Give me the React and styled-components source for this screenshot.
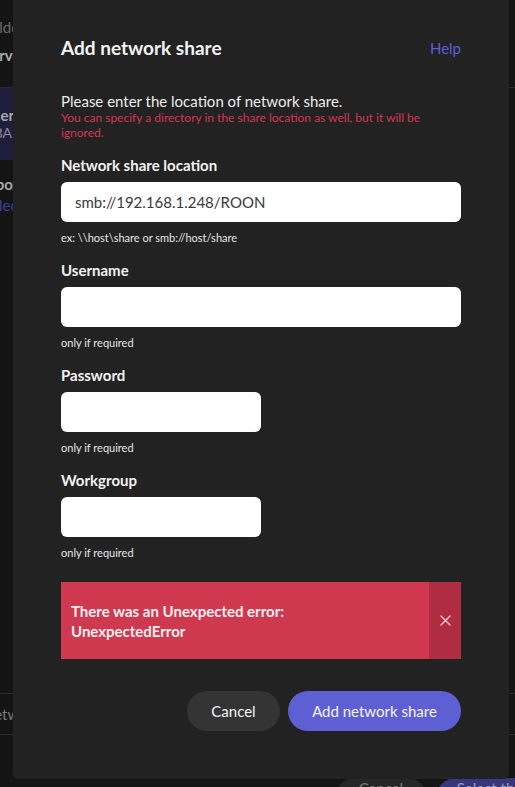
import React from "react";
import styled, { createGlobalStyle } from "styled-components";

const Global = createGlobalStyle`
  html, body {
    margin: 0;
    padding: 0;
    background: #141414;
    height: 787px;
    overflow: hidden;
  }
  body {
    font-family: Lato, "Open Sans", sans-serif;
    -webkit-font-smoothing: antialiased;
  }
  * { box-sizing: border-box; }
`;

/* ---------- background (dimmed dialog underneath) ---------- */
const Back = styled.div`
  display: flex;
  flex-direction: column;
  margin-left: -17px;
  width: 560px;
  height: 840px;
  font-family: Lato, sans-serif;
`;

const BackRow = styled.div`
  display: flex;
  flex-direction: column;
  justify-content: center;
  flex: none;
  height: ${(p) => p.$h}px;
  width: ${(p) => (p.$active ? "420px" : "auto")};
  background: ${(p) => (p.$active ? "#1e1e3c" : "transparent")};
  border-top: ${(p) => (p.$line ? "1px solid #2a2a2a" : "none")};
  border-bottom: ${(p) => (p.$lineBottom ? "1px solid #2a2a2a" : "none")};
`;

const BackText = styled.span`
  font-size: ${(p) => p.$size || 15}px;
  font-weight: ${(p) => (p.$bold ? 700 : 400)};
  color: ${(p) => p.$color || "#6a6a6a"};
  line-height: 18px;
  white-space: nowrap;
`;

const BackSpacer = styled.div`
  flex: 1;
`;

const BackFooter = styled.div`
  display: flex;
  justify-content: flex-end;
  gap: 9px;
  height: 62px;
  flex: none;
`;

const BackButton = styled.div`
  height: 40px;
  width: ${(p) => p.$w}px;
  border-radius: 20px 20px 0 0;
  background: ${(p) => (p.$primary ? "#36367a" : "#262626")};
  color: ${(p) => (p.$primary ? "#9a9ac4" : "#7a7a7a")};
  font-size: 15px;
  line-height: 18px;
  display: flex;
  justify-content: center;
  padding-top: 1px;
`;

/* ---------- modal ---------- */
const Overlay = styled.div`
  position: fixed;
  inset: 0;
  display: flex;
  align-items: flex-start;
  padding-left: 13px;
`;

const Modal = styled.div`
  width: 496px;
  margin-top: -8px;
  background: #222222;
  border-radius: 5px;
  padding: 45px 48px 48px;
  display: flex;
  flex-direction: column;
`;

const Header = styled.div`
  display: flex;
  justify-content: space-between;
  align-items: center;
  height: 22px;
`;

const Title = styled.h2`
  margin: 0;
  font-size: 19px;
  line-height: 22px;
  font-weight: 700;
  color: #f4f4f4;
`;

const HelpLink = styled.a`
  font-size: 15px;
  color: #5b5ed6;
  text-decoration: none;
  cursor: pointer;
`;

const Intro = styled.p`
  margin: 33px 0 0;
  font-size: 15px;
  line-height: 18px;
  color: #ececec;
`;

const Warning = styled.p`
  margin: 0;
  font-size: 12px;
  line-height: 15px;
  color: #d5364f;
`;

const Field = styled.div`
  display: flex;
  flex-direction: column;
  align-items: flex-start;
  margin-top: 16px;
`;

const Label = styled.label`
  font-size: 15px;
  line-height: 18px;
  font-weight: 700;
  color: #f2f2f2;
  margin-bottom: 8px;
`;

const Input = styled.input`
  width: ${(p) => (p.$short ? "200px" : "100%")};
  height: 40px;
  border: none;
  outline: none;
  border-radius: 6px;
  background: #ffffff;
  padding: 0 14px;
  font-family: Lato, sans-serif;
  font-size: 15px;
  color: #3a3a3a;
`;

const Hint = styled.span`
  margin-top: 9px;
  font-size: 11px;
  line-height: 14px;
  color: #e6e6e6;
`;

const ErrorBox = styled.div`
  margin-top: 22px;
  display: flex;
  background: #cf394f;
  min-height: 77px;
`;

const ErrorText = styled.div`
  flex: 1;
  padding: 19px 10px 18px;
  font-size: 15px;
  line-height: 20px;
  font-weight: 700;
  color: #fbeef0;
`;

const ErrorClose = styled.button`
  width: 32px;
  border: none;
  padding: 0;
  background: #b02d41;
  display: flex;
  align-items: center;
  justify-content: center;
  cursor: pointer;
`;

const Actions = styled.div`
  margin-top: 32px;
  display: flex;
  justify-content: flex-end;
  gap: 8px;
`;

const Button = styled.button`
  height: 40px;
  border: none;
  border-radius: 20px;
  padding: 0 24px;
  min-width: ${(p) => (p.$primary ? 173 : 93)}px;
  background: ${(p) => (p.$primary ? "#5e5fd2" : "#343434")};
  color: #f4f4f4;
  font-family: Lato, sans-serif;
  font-size: 15px;
  cursor: pointer;
`;

const CloseIcon = () => (
  <svg width="11" height="11" viewBox="0 0 11 11" fill="none">
    <path d="M1 1 L10 10 M10 1 L1 10" stroke="#f6d3d8" strokeWidth="1.3" strokeLinecap="round" />
  </svg>
);

export default function App() {
  return (
    <>
      <Global />
      <Back>
        <BackRow $h={17} />
        <BackRow $h={20}>
          <BackText>Folder</BackText>
        </BackRow>
        <BackRow $h={8} />
        <BackRow $h={20}>
          <BackText $bold $color="#a9a9a9">Server</BackText>
        </BackRow>
        <BackRow $h={23} $lineBottom />
        <BackRow $h={72} $active>
          <BackText $bold $color="#a9a9a9">User</BackText>
          <BackText $size={14} $color="#8a8a9a">NBA</BackText>
        </BackRow>
        <BackRow $h={14} />
        <BackRow $h={20}>
          <BackText $bold $color="#a9a9a9">Inbox</BackText>
        </BackRow>
        <BackRow $h={22}>
          <BackText $color="#3e3e9c">Select</BackText>
        </BackRow>
        <BackSpacer />
        <BackRow $h={42} $line $lineBottom>
          <BackText $color="#7a7a7a">Network</BackText>
        </BackRow>
        <BackRow $h={43} />
        <BackFooter>
          <BackButton $w={92}>Cancel</BackButton>
          <BackButton $w={107} $primary>Select the</BackButton>
        </BackFooter>
      </Back>

      <Overlay>
        <Modal>
          <Header>
            <Title>Add network share</Title>
            <HelpLink>Help</HelpLink>
          </Header>

          <Intro>Please enter the location of network share.</Intro>
          <Warning>
            You can specify a directory in the share location as well, but it will be ignored.
          </Warning>

          <Field>
            <Label>Network share location</Label>
            <Input defaultValue="smb://192.168.1.248/ROON" />
            <Hint>ex: \\host\share or smb://host/share</Hint>
          </Field>

          <Field>
            <Label>Username</Label>
            <Input />
            <Hint>only if required</Hint>
          </Field>

          <Field>
            <Label>Password</Label>
            <Input $short type="password" />
            <Hint>only if required</Hint>
          </Field>

          <Field>
            <Label>Workgroup</Label>
            <Input $short />
            <Hint>only if required</Hint>
          </Field>

          <ErrorBox>
            <ErrorText>
              There was an Unexpected error:
              <br />
              UnexpectedError
            </ErrorText>
            <ErrorClose aria-label="Dismiss">
              <CloseIcon />
            </ErrorClose>
          </ErrorBox>

          <Actions>
            <Button>Cancel</Button>
            <Button $primary>Add network share</Button>
          </Actions>
        </Modal>
      </Overlay>
    </>
  );
}
